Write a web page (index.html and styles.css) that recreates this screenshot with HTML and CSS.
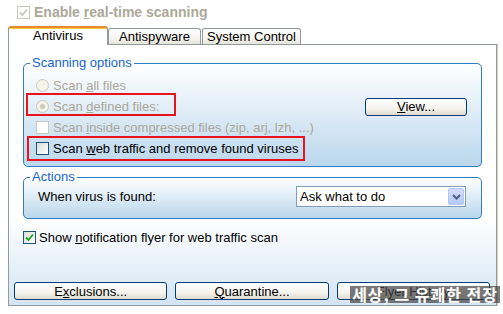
FILE: index.html
```html
<!DOCTYPE html>
<html lang="en">
<head>
  <meta charset="UTF-8">
  <title>Antivirus Settings</title>
  <link rel="stylesheet" href="styles.css">
</head>
<body>
<div class="window">
  <div class="top-check">
    <span class="box disabled">
      <svg width="9" height="9" viewBox="0 0 9 9"><path d="M1 4.5 L3.5 7 L8 1.5" fill="none" stroke="#c8c6b8" stroke-width="1.8"/></svg>
    </span>
    <span>Enable <u>r</u>eal-time scanning</span>
  </div>

  <div class="tabs">
    <div class="tab active">Antivirus</div>
    <div class="tab spy">Antispyware</div>
    <div class="tab sys">System Control</div>
  </div>

  <div class="panel">
    <fieldset class="group">
      <legend>Scanning options</legend>
      <div class="rows scan-rows">
        <div class="row">
          <div class="opt disabled"><span class="radio"></span><span>Scan <u>a</u>ll files</span></div>
        </div>
        <div class="row between">
          <div class="opt disabled mark-one"><span class="radio on"></span><span>Scan <u>d</u>efined files:</span></div>
          <button class="btn view"><u>V</u>iew...</button>
        </div>
        <div class="row">
          <div class="opt disabled"><span class="box disabled"></span><span>Scan <u>i</u>nside compressed files (zip, arj, lzh, ...)</span></div>
        </div>
        <div class="row">
          <div class="opt mark-two"><span class="box"></span><span>Scan <u>w</u>eb traffic and remove found viruses</span></div>
        </div>
      </div>
    </fieldset>

    <fieldset class="group actions">
      <legend>Actions</legend>
      <div class="rows action-rows">
        <div class="row between">
          <span>When virus is found:</span>
          <div class="select">
            <span>Ask what to do</span>
            <span class="arrow">
              <svg width="9" height="6" viewBox="0 0 9 6"><path d="M1 1 L4.5 4.5 L8 1" fill="none" stroke="#4d6185" stroke-width="2"/></svg>
            </span>
          </div>
        </div>
      </div>
    </fieldset>

    <div class="opt notify">
      <span class="box">
        <svg width="9" height="9" viewBox="0 0 9 9"><path d="M1 4.5 L3.5 7 L8 1.5" fill="none" stroke="#21a121" stroke-width="1.8"/></svg>
      </span>
      <span>Show <u>n</u>otification flyer for web traffic scan</span>
    </div>

    <div class="buttons">
      <button class="btn">E<u>x</u>clusions...</button>
      <button class="btn"><u>Q</u>uarantine...</button>
      <button class="btn">Flyer History</button>
    </div>
  </div>

  <div class="watermark">세상, 그 유쾌한 전장</div>
</div>
</body>
</html>
```

FILE: styles.css
```css
body {
  margin: 0;
  font-family: "Liberation Sans", Arial, sans-serif;
  font-size: 13px;
  color: #000;
  background: #fff;
}
.window {
  position: relative;
  width: 503px;
  height: 314px;
  overflow: hidden;
}
.top-check {
  display: flex;
  align-items: center;
  gap: 4px;
  height: 24px;
  padding-left: 17px;
  font-size: 14px;
  font-weight: bold;
  color: #aca899;
}
.box {
  width: 13px;
  height: 13px;
  box-sizing: border-box;
  border: 1px solid #1c5180;
  background: linear-gradient(135deg, #dcdcd7, #fff);
  display: flex;
  align-items: center;
  justify-content: center;
  flex-shrink: 0;
}
.box.disabled {
  border-color: #cac8bb;
  background: #fff;
}
.radio {
  width: 13px;
  height: 13px;
  box-sizing: border-box;
  border: 1px solid #cac8bb;
  border-radius: 50%;
  background: #f5f4ea;
  display: flex;
  align-items: center;
  justify-content: center;
  flex-shrink: 0;
}
.radio.on::after {
  content: "";
  width: 5px;
  height: 5px;
  border-radius: 50%;
  background: #cac8bb;
}

.tabs {
  display: flex;
  align-items: flex-end;
  height: 20px;
  margin-left: 8px;
}
.tab {
  box-sizing: border-box;
  height: 16px;
  border: 1px solid #919b9c;
  border-bottom: none;
  border-radius: 3px 3px 0 0;
  background: linear-gradient(#fff, #f3f2ec 70%, #e4e2d8);
  text-align: center;
  line-height: 15px;
}
.tab.active {
  position: relative;
  z-index: 1;
  width: 100px;
  height: 19px;
  margin-bottom: -1px;
  border-top: 2px solid #e68b2c;
  box-shadow: inset 0 1px #ffc83c;
  background: #fff;
  line-height: 14px;
  padding-top: 1px;
}
.tab.spy {
  width: 93px;
}
.tab.sys {
  width: 99px;
  margin-left: 1px;
}

.panel {
  box-sizing: border-box;
  width: 489px;
  height: 262px;
  margin-left: 8px;
  padding: 11px 14px 0;
  border: 1px solid #919b9c;
  box-shadow: 1px 0 #d0d0bf;
  background: linear-gradient(#fff 0%, #fff 66%, #d3e4f3 100%);
  display: flex;
  flex-direction: column;
}
.group {
  margin: 0;
  padding: 0;
  border: 1px solid #2f7dc6;
  border-radius: 5px;
  background: linear-gradient(#fff, #bad7ed);
  min-width: 0;
}
.group legend {
  margin-left: 6px;
  padding: 0 2px;
  line-height: 14px;
  color: #1565cc;
}
.actions {
  margin-top: 3px;
}
.rows {
  display: flex;
  flex-direction: column;
}
.scan-rows {
  padding: 5px 14px 7px 12px;
}
.action-rows {
  padding: 2px 15px 11px 14px;
}
.row {
  display: flex;
  align-items: center;
  height: 21px;
}
.between {
  justify-content: space-between;
}
.opt {
  position: relative;
  display: flex;
  align-items: center;
  gap: 4px;
}
.disabled {
  color: #aca899;
}
.mark-one::after,
.mark-two::after {
  content: "";
  position: absolute;
  border: 2px solid #e8131c;
}
.mark-one::after {
  top: -6px;
  bottom: -2px;
  left: -10px;
  right: -17px;
}
.mark-two::after {
  top: -5px;
  bottom: -5px;
  left: -9px;
  right: -7px;
}

.btn {
  box-sizing: border-box;
  height: 18px;
  padding: 0;
  border: 1px solid #003c74;
  border-radius: 3px;
  background: linear-gradient(#fff, #f4f3ee 60%, #dedbcf);
  font-family: inherit;
  font-size: 13px;
  color: #000;
  line-height: 15px;
}
.view {
  width: 102px;
}

.select {
  box-sizing: border-box;
  width: 170px;
  height: 21px;
  border: 1px solid #7f9db9;
  background: #fff;
  display: flex;
  align-items: center;
  justify-content: space-between;
  padding: 1px 1px 1px 3px;
}
.arrow {
  box-sizing: border-box;
  width: 16px;
  height: 17px;
  border: 1px solid #b4c7f2;
  border-radius: 2px;
  background: linear-gradient(#d3defb, #b5c8f4);
  display: flex;
  align-items: center;
  justify-content: center;
}

.notify {
  margin-top: 10px;
  height: 16px;
  gap: 3px;
}

.buttons {
  display: flex;
  gap: 8px;
  margin: auto -8px 5px -9px;
}
.buttons .btn {
  flex: 1;
}

.watermark {
  position: absolute;
  right: 3px;
  bottom: 11px;
  padding: 0 2px;
  background: rgba(70, 70, 70, 0.72);
  color: #fff;
  font-family: "Noto Sans CJK KR", sans-serif;
  font-size: 16px;
  font-weight: bold;
  line-height: 17px;
  letter-spacing: 1px;
}
```
